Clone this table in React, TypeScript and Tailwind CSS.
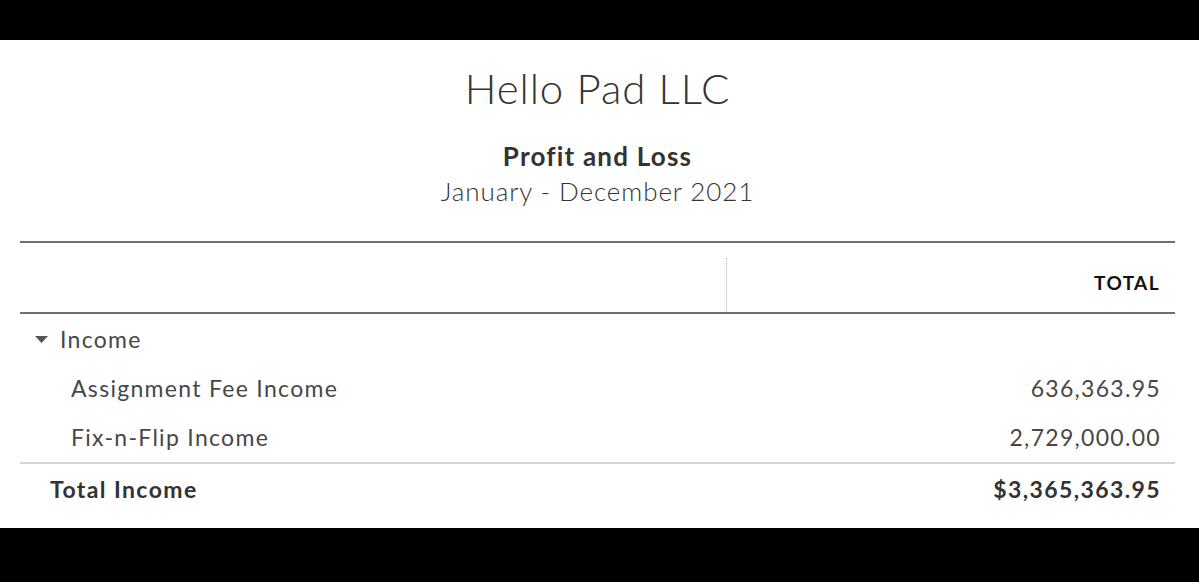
// Profit and Loss report snippet, framed by black bars.
const rows = [
  { label: 'Assignment Fee Income', amount: '636,363.95' },
  { label: 'Fix-n-Flip Income', amount: '2,729,000.00' },
];

export default function App() {
  return (
    <div className="h-[582px] w-[1199px] bg-black flex flex-col overflow-hidden font-['Lato',sans-serif]">
      <div className="h-[40px] shrink-0" />

      <main className="h-[488px] shrink-0 bg-white overflow-hidden px-[20px] pr-[24px]">
        {/* Report header */}
        <header className="flex flex-col items-center text-[#333]">
          <h1 className="mt-[23px] text-[42px] leading-[50px] tracking-[0.9px] font-light">Hello Pad LLC</h1>
          <h2 className="mt-[27px] text-[26px] leading-[32px] tracking-[1.2px] font-bold">Profit and Loss</h2>
          <p className="mt-[3px] text-[26px] leading-[32px] tracking-[0.9px] font-light">January - December 2021</p>
        </header>

        {/* Column header */}
        <div className="mt-[34px] border-t-2 border-b-2 border-[#6f6f6f] h-[73px] flex">
          <div className="w-[707px] flex items-end">
            <div className="ml-auto h-[54px] border-r border-dotted border-[#bbb]" />
          </div>
          <div className="flex-1 flex items-center justify-end pt-[12px] pr-[15px] text-[19px] tracking-[1.4px] font-bold text-[#111]">
            TOTAL
          </div>
        </div>

        {/* Income section */}
        <div className="h-[50px] flex items-center text-[23px] tracking-[1.3px] text-[#474747]">
          <svg width="13" height="7" viewBox="0 0 13 7" className="ml-[15px] mr-[12px]">
            <polygon points="0,0 13,0 6.5,7" fill="#555" />
          </svg>
          <span>Income</span>
        </div>
        {rows.map((r) => (
          <div key={r.label} className="h-[49px] flex items-center justify-between pl-[51px] pr-[14px] text-[23px] tracking-[1.3px] text-[#474747]">
            <span>{r.label}</span>
            <span>{r.amount}</span>
          </div>
        ))}
        <div className="h-[51px] border-t-2 border-[#d4d4d4] pt-[1px] flex items-center justify-between pl-[30px] pr-[14px] text-[23px] tracking-[1.4px] font-bold text-[#333]">
          <span>Total Income</span>
          <span>$3,365,363.95</span>
        </div>
        <div className="h-[49px] pt-[4px] flex items-center pl-[51px] text-[23px] tracking-[1.3px] text-[#474747]">
          <span>Cost of Goods Sold</span>
        </div>
      </main>

      <div className="flex-1" />
    </div>
  );
}
